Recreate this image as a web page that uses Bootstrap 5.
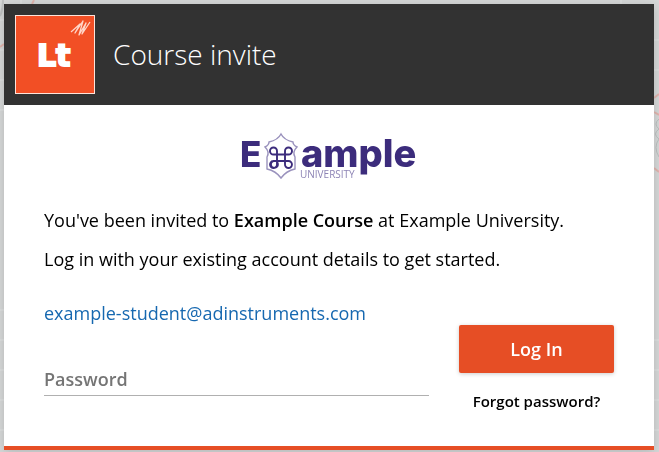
<!DOCTYPE html>
<html lang="en">
<head>
<meta charset="utf-8">
<meta name="viewport" content="width=device-width, initial-scale=1">
<title>Course invite</title>
<link href="https://cdn.jsdelivr.net/npm/bootstrap@5.3.0/dist/css/bootstrap.min.css" rel="stylesheet">
<style>
body { background: #d6d8d8; font-family: "Open Sans", sans-serif; font-size: 18px; line-height: 27px; color: #000; padding: 4px 5px 2px 4px; }
.backdrop { z-index: -1; }
.invite { border-bottom: 4px solid #e64e25; box-shadow: 0 2px 10px rgba(0,0,0,.16); }
.invite-head { background: #323232; padding: 11px 11px 10px; gap: 18px; }
.invite-title { font-size: 28px; font-weight: 300; line-height: 40px; padding-bottom: 2px; }
.invite-body { padding: 27px 40px 31px; }
.logo { margin-bottom: 27px; }
.message { margin-bottom: 12px; }
.login { margin-top: 27px; gap: 30px; }
.email { color: #1668b0; }
.field { margin-top: 39px; }
.field-label { color: #757575; font-weight: 600; }
.password { border: 0; border-bottom: 1px solid #b0b0b0; line-height: 27px; padding: 0 0 2px; outline: 0; }
.password:focus { border-color: #e64e25; }
.password:not(:placeholder-shown) + .field-label { opacity: 0; }
.actions { width: 155px; padding-top: 25px; gap: 15px; }
.btn-login { --bs-btn-color: #fff; --bs-btn-bg: #e64e25; --bs-btn-hover-color: #fff; --bs-btn-hover-bg: #cf421c; --bs-btn-border-width: 0; --bs-btn-border-radius: 2px; --bs-btn-font-size: 18px; --bs-btn-font-weight: 600; --bs-btn-line-height: 24px; --bs-btn-padding-y: 12px; box-shadow: 0 1px 4px rgba(0,0,0,.2); }
.forgot { color: #000; font-size: 15px; font-weight: 600; }
</style>
<script src="https://cdn.jsdelivr.net/npm/bootstrap@5.3.0/dist/js/bootstrap.bundle.min.js"></script>
</head>
<body>
<svg class="backdrop position-fixed top-0 start-0 w-100 h-100" viewBox="0 0 659 452" preserveAspectRatio="none" fill="none" aria-hidden="true">
  <path d="M0 20h4M0 50h4M0 80h4M0 110h4M0 310h4M0 340h4M0 370h4M0 400h4M0 430h4M654 40h5M654 70h5M654 340h5M654 370h5M654 400h5M654 430h5M21 0v4M621 0v4" stroke="#e2e4e4"/>
  <path d="M3 0Q3 10 0 16" stroke="#bfc2c2" stroke-width="2"/>
  <path d="M34 0l-2 4M0 47l4-3M654 98l5-4M654 112l5 3M654 168l5 4" stroke="#e0b5ae" stroke-width="2"/>
  <path d="M659 119q-6 5 0 10q-7 5 0 10q-6 8 0 18" stroke="#bcc0c0"/>
</svg>
<main class="invite bg-white">
  <header class="invite-head d-flex align-items-center">
    <svg width="80" height="80" viewBox="0 0 80 80" role="img" aria-label="Lt">
      <rect x=".5" y=".5" width="79" height="78" fill="#f24f25" stroke="#ffe3da"/>
      <text x="22" y="51" font-family="DejaVu Sans, sans-serif" font-weight="700" font-size="30" fill="#fff" stroke="#fff" stroke-width="2">Lt</text>
      <path d="M56 17L65 9L60 18L68 6L64 20L71 8L67 19L75 7" fill="none" stroke="#ffd6c9" stroke-width="1.3" stroke-linejoin="round"/>
    </svg>
    <h1 class="invite-title text-white mb-0">Course invite</h1>
  </header>
  <div class="invite-body">
    <svg class="logo d-block mx-auto" width="180" height="48" viewBox="0 0 180 48" role="img" aria-label="Example University">
      <g font-family="Inter, sans-serif" font-weight="800" fill="#3c2c7c">
        <text x="1" y="35" font-size="35">E</text>
        <text x="62" y="35" font-size="38">ample</text>
      </g>
      <path d="M42 2Q39 8 30 10Q30 13 26 15Q31 20 28 25V37Q37 39 42 46Q47 39 56 37V25Q53 20 58 15Q54 13 54 10Q45 8 42 2Z" fill="none" stroke="#9a92bd" stroke-width="1.4"/>
      <path d="M38 19V30A3.500 3.500 0 1 1 34.500 29H49.500A3.500 3.500 0 1 1 46 32V19A3.500 3.500 0 1 1 49.500 22.500H34.500A3.500 3.500 0 1 1 38 19V32A3.500 3.500 0 1 1 34.500 29" fill="none" stroke="#3c2c7c" stroke-width="1.9"/>
      <text x="61" y="46" font-family="Open Sans, sans-serif" font-size="10" fill="#8d84b5">UNIVERSITY</text>
    </svg>
    <p class="message">You've been invited to <strong class="fw-semibold">Example Course</strong> at Example University.</p>
    <p class="mb-0">Log in with your existing account details to get started.</p>
    <form class="login d-flex align-items-start">
      <div class="flex-grow-1">
        <div class="email">example-student@adinstruments.com</div>
        <div class="field position-relative">
          <input class="password d-block w-100" id="password" type="password" placeholder=" ">
          <label class="field-label position-absolute top-0 start-0 pe-none" for="password">Password</label>
        </div>
      </div>
      <div class="actions d-flex flex-column flex-shrink-0">
        <button class="btn btn-login w-100" type="submit">Log In</button>
        <a class="forgot text-center text-decoration-none" href="#">Forgot password?</a>
      </div>
    </form>
  </div>
</main>
</body>
</html>
